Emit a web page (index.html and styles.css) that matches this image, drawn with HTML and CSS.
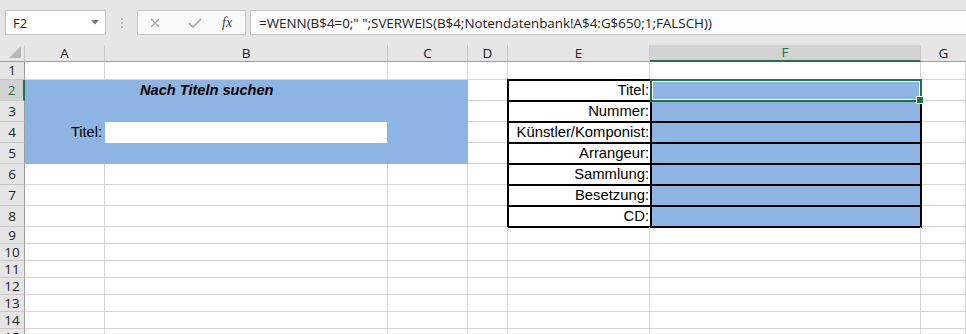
FILE: index.html
```html
<!DOCTYPE html>
<html lang="de">
<head>
    <meta charset="UTF-8">
    <title>Notensuche</title>
    <link rel="stylesheet" href="styles.css">
</head>
<body>
<div class="app">
    <div class="toolbar">
        <div class="name-box">
            <span>F2</span>
            <svg class="caret" width="8" height="5" viewBox="0 0 8 5"><path d="M0 0 H8 L4 4.5 Z" fill="#777"/></svg>
        </div>
        <div class="grip">
            <i></i><i></i><i></i>
        </div>
        <div class="fx-box">
            <svg class="fx-icon" width="12" height="12" viewBox="0 0 12 12"><path d="M2 2 L10 10 M10 2 L2 10" stroke="#a6a6a6" stroke-width="1.3" fill="none"/></svg>
            <svg class="fx-icon check" width="14" height="12" viewBox="0 0 14 12"><path d="M1 6 L5 10 L13 2" stroke="#a6a6a6" stroke-width="1.6" fill="none"/></svg>
            <span class="fx-label">fx</span>
        </div>
        <div class="formula">=WENN(B$4=0;" ";SVERWEIS(B$4;Notendatenbank!A$4:G$650;1;FALSCH))</div>
    </div>

    <div class="sheet">
        <!-- column headers -->
        <div class="corner"><svg width="12" height="12" viewBox="0 0 12 12"><path d="M12 0 V12 H0 Z" fill="#b8b8b8"/></svg></div>
        <div class="col-head">A</div>
        <div class="col-head">B</div>
        <div class="col-head">C</div>
        <div class="col-head">D</div>
        <div class="col-head">E</div>
        <div class="col-head active">F</div>
        <div class="col-head last">G</div>

        <!-- row 1 -->
        <div class="row-head">1</div>
        <div class="cell"></div><div class="cell"></div><div class="cell"></div><div class="cell"></div><div class="cell"></div><div class="cell"></div><div class="cell"></div>

        <!-- row 2 -->
        <div class="row-head active">2</div>
        <div class="cell blue"></div>
        <div class="cell blue title">Nach Titeln suchen</div>
        <div class="cell blue"></div>
        <div class="cell"></div>
        <div class="cell"></div>

        <!-- row 3 -->
        <div class="row-head">3</div>
        <div class="cell blue"></div><div class="cell blue"></div><div class="cell blue"></div><div class="cell"></div>
        <div class="cell"></div>

        <!-- row 4 -->
        <div class="row-head">4</div>
        <div class="cell blue label">Titel:</div>
        <div class="cell input"></div>
        <div class="cell blue"></div>
        <div class="cell"></div>
        <div class="cell"></div>

        <!-- row 5 -->
        <div class="row-head">5</div>
        <div class="cell blue"></div><div class="cell blue"></div><div class="cell blue"></div><div class="cell"></div>
        <div class="cell"></div>

        <!-- rows 6 - 8 -->
        <div class="row-head">6</div>
        <div class="cell"></div><div class="cell"></div><div class="cell"></div><div class="cell"></div>
        <div class="cell"></div>
        <div class="row-head">7</div>
        <div class="cell"></div><div class="cell"></div><div class="cell"></div><div class="cell"></div>
        <div class="cell"></div>
        <div class="row-head">8</div>
        <div class="cell"></div><div class="cell"></div><div class="cell"></div><div class="cell"></div>
        <div class="cell"></div>

        <!-- result table E2:F8 -->
        <div class="result">
            <div class="key">Titel:</div><div class="val selected"></div>
            <div class="key">Nummer:</div><div class="val"></div>
            <div class="key">Künstler/Komponist:</div><div class="val"></div>
            <div class="key">Arrangeur:</div><div class="val"></div>
            <div class="key">Sammlung:</div><div class="val"></div>
            <div class="key">Besetzung:</div><div class="val"></div>
            <div class="key">CD:</div><div class="val"></div>
        </div>

        <!-- rows 9 - 15 -->
        <div class="row-head">9</div>
        <div class="cell"></div><div class="cell"></div><div class="cell"></div><div class="cell"></div><div class="cell"></div><div class="cell"></div><div class="cell"></div>
        <div class="row-head">10</div>
        <div class="cell"></div><div class="cell"></div><div class="cell"></div><div class="cell"></div><div class="cell"></div><div class="cell"></div><div class="cell"></div>
        <div class="row-head">11</div>
        <div class="cell"></div><div class="cell"></div><div class="cell"></div><div class="cell"></div><div class="cell"></div><div class="cell"></div><div class="cell"></div>
        <div class="row-head">12</div>
        <div class="cell"></div><div class="cell"></div><div class="cell"></div><div class="cell"></div><div class="cell"></div><div class="cell"></div><div class="cell"></div>
        <div class="row-head">13</div>
        <div class="cell"></div><div class="cell"></div><div class="cell"></div><div class="cell"></div><div class="cell"></div><div class="cell"></div><div class="cell"></div>
        <div class="row-head">14</div>
        <div class="cell"></div><div class="cell"></div><div class="cell"></div><div class="cell"></div><div class="cell"></div><div class="cell"></div><div class="cell"></div>
        <div class="row-head">15</div>
        <div class="cell"></div><div class="cell"></div><div class="cell"></div><div class="cell"></div><div class="cell"></div><div class="cell"></div><div class="cell"></div>
    </div>
</div>
</body>
</html>
```

FILE: styles.css
```css
* {
    margin: 0;
    padding: 0;
    box-sizing: border-box;
}
body {
    width: 966px;
    height: 334px;
    overflow: hidden;
    background-color: #ffffff;
    font-family: "Liberation Sans", Arial, sans-serif;
}
.app {
    width: 966px;
    height: 334px;
    overflow: hidden;
    background-color: #e6e6e6;
}

/* formula bar */
.toolbar {
    display: flex;
    align-items: center;
    height: 45px;
    padding: 0 0 0 5px;
}
.name-box {
    display: flex;
    align-items: center;
    justify-content: space-between;
    width: 101px;
    height: 25px;
    padding: 0 6px 0 7px;
    background-color: #ffffff;
    border: 1px solid #c6c6c6;
    font-family: "Open Sans", "Noto Sans", sans-serif;
    font-size: 13px;
    color: #222222;
}
.grip {
    display: flex;
    flex-direction: column;
    gap: 2px;
    width: 31px;
    align-items: center;
}
.grip i {
    display: block;
    width: 2px;
    height: 2px;
    background-color: #b4b4b4;
}
.fx-box {
    display: flex;
    align-items: center;
    width: 109px;
    height: 25px;
    padding: 0 0 0 11px;
    background-color: #fafafa;
    border: 1px solid #c6c6c6;
}
.fx-icon.check {
    margin-left: 27px;
}
.fx-label {
    margin-left: 20px;
    font-family: "Liberation Serif", serif;
    font-style: italic;
    font-size: 14px;
    color: #444444;
}
.formula {
    flex: 1;
    height: 25px;
    margin-left: 4px;
    padding: 0 0 0 8px;
    line-height: 24px;
    background-color: #fcfcfc;
    border-top: 1px solid #c6c6c6;
    border-bottom: 1px solid #c6c6c6;
    border-left: 1px solid #c6c6c6;
    font-family: "Open Sans", "Noto Sans", sans-serif;
    font-size: 13.4px;
    color: #222222;
    white-space: nowrap;
}

/* sheet grid */
.sheet {
    display: grid;
    grid-template-columns: 25px 80px 283px 80px 40px 142px 271px 45px;
    grid-template-rows: 17px 18px repeat(7, 21px) repeat(7, 17px);
    background-color: #ffffff;
}
.corner, .col-head, .row-head {
    background-color: #e6e6e6;
    font-family: "Open Sans", "Noto Sans", sans-serif;
    font-size: 13.5px;
    line-height: 15px;
    color: #222222;
}
.corner {
    display: flex;
    align-items: flex-end;
    justify-content: flex-end;
    padding: 0 3px 3px 0;
    border-right: 1px solid #c8c8c8;
    border-bottom: 1px solid #9c9c9c;
}
.col-head {
    display: flex;
    align-items: center;
    justify-content: center;
    border-right: 1px solid #c8c8c8;
    border-bottom: 1px solid #9c9c9c;
}
.col-head.last {
    border-right: none;
}
.col-head.active {
    background-color: #d2d2d2;
    color: #217346;
    border-bottom: 2px solid #217346;
    border-right-color: #c8c8c8;
}
.row-head {
    display: flex;
    align-items: center;
    justify-content: center;
    border-right: 1px solid #9c9c9c;
    border-bottom: 1px solid #c8c8c8;
}
.row-head.active {
    background-color: #d2d2d2;
    color: #217346;
    border-right: 2px solid #217346;
}
.cell {
    border-right: 1px solid #d4d4d4;
    border-bottom: 1px solid #d4d4d4;
    font-size: 14.6px;
    color: #000000;
    white-space: nowrap;
    line-height: 20px;
}
.cell.blue {
    background-color: #8db4e2;
    border-color: #8db4e2;
}
.cell.title {
    padding-left: 35px;
    font-weight: bold;
    font-style: italic;
}
.cell.label {
    text-align: right;
    padding-right: 2px;
}
.cell.input {
    background-color: #ffffff;
    border-right-color: #8db4e2;
    border-bottom-color: #ffffff;
}

/* result block E2:F8 */
.result {
    grid-column: 6 / 8;
    grid-row: 3 / 10;
    margin: -1px;
    display: grid;
    grid-template-columns: 141px 1fr;
    grid-template-rows: repeat(7, 19px);
    gap: 2px;
    background-color: #000000;
    border: 2px solid #000000;
    font-size: 14.8px;
}
.key {
    background-color: #ffffff;
    text-align: right;
    padding-right: 1px;
    line-height: 19px;
    white-space: nowrap;
}
.val {
    background-color: #8db4e2;
}
.val.selected {
    position: relative;
}
.val.selected::before {
    content: "";
    position: absolute;
    top: -2px;
    left: -2px;
    right: -2px;
    bottom: -2px;
    border: 2px solid #217346;
    box-shadow: inset 0 0 0 1px #ffffff;
}
.val.selected::after {
    content: "";
    position: absolute;
    right: -4px;
    bottom: -4px;
    width: 6px;
    height: 6px;
    background-color: #217346;
    border: 1px solid #ffffff;
}
```
